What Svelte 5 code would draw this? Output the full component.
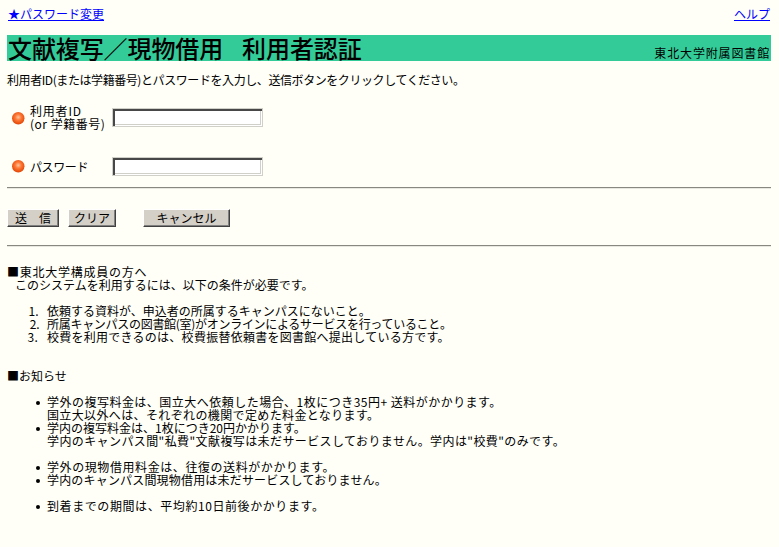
<script>
  const conditions = [
    { text: '依頼する資料が、申込者の所属するキャンパスにないこと。', cls: '' },
    { text: '所属キャンパスの図書館(室)がオンラインによるサービスを行っていること。', cls: 'tight' },
    { text: '校費を利用できるのは、校費振替依頼書を図書館へ提出している方です。', cls: 'wide' }
  ];
</script>

{#snippet ball(id)}
  <svg class="ball" width="13" height="13" viewBox="0 0 13 13" aria-hidden="true">
    <defs>
      <radialGradient id={id} cx="0.5" cy="0.42" r="0.6">
        <stop offset="0" stop-color="#ffc8a0" />
        <stop offset="0.4" stop-color="#ff7a38" />
        <stop offset="1" stop-color="#e04000" />
      </radialGradient>
    </defs>
    <circle cx="6.25" cy="6.25" r="6.2" fill="url(#{id})" />
  </svg>
{/snippet}

<div class="page">
  <nav class="top">
    <a href="#pw">★パスワード変更</a>
    <a href="#help">ヘルプ</a>
  </nav>

  <header class="bar">
    <h1><span>文献複写／現物借用</span><span>利用者認証</span></h1>
    <span class="lib">東北大学附属図書館</span>
  </header>

  <p class="intro">利用者ID(または学籍番号)とパスワードを入力し、送信ボタンをクリックしてください。</p>

  <form class="fields">
    <div class="field first">
      {@render ball('b1')}
      <label class="lbl" for="uid"><span class="l1">利用者ID</span><br /><span class="l2">(or 学籍番号)</span></label>
      <input id="uid" type="text" />
    </div>
    <div class="field second">
      {@render ball('b2')}
      <label class="lbl" for="pw"><span class="l3">パスワード</span></label>
      <input id="pw" type="password" />
    </div>
  </form>

  <hr class="rule-a" />

  <div class="buttons">
    <button type="button" class="send">送　信</button>
    <button type="button" class="clear">クリア</button>
    <button type="button" class="cancel">キャンセル</button>
  </div>

  <hr class="rule-b" />

  <section class="members">
    <div class="head">■東北大学構成員の方へ</div>
    <div class="indent">このシステムを利用するには、以下の条件が必要です。</div>
    <ol>
      {#each conditions as c}<li class={c.cls}>{c.text}</li>{/each}
    </ol>
  </section>

  <section class="notice">
    <div>■お知らせ</div>
    <ul>
      <li><span class="s48">学外の複写料金は、国立大へ依頼した場合、1枚につき35円+ 送料がかかります。</span><br /><span class="s37">国立大以外へは、それぞれの機関で定めた料金となります。</span></li>
      <li><span>学内の複写料金は、1枚につき20円かかります。</span><br /><span class="s40">学内のキャンパス間"私費"文献複写は未だサービスしておりません。学内は"校費"のみです。</span><br />&nbsp;</li>
      <li><span class="s58">学外の現物借用料金は、往復の送料がかかります。</span></li>
      <li><span class="s18">学内のキャンパス間現物借用は未だサービスしておりません。</span><br />&nbsp;</li>
      <li><span class="s58">到着までの期間は、平均約10日前後かかります。</span></li>
    </ul>
  </section>
</div>

<style>
  :global(body) {
    margin: 0;
    background: #fffff8;
  }
  .page {
    padding: 7px 8px 0 7px;
    font: 12px/13px "Noto Sans CJK JP", sans-serif;
    color: #000;
  }
  a { color: #00f; }
  .top {
    display: flex;
    justify-content: space-between;
    height: 28px;
    padding: 0 1px;
  }
  .bar {
    display: flex;
    justify-content: space-between;
    align-items: flex-end;
    height: 26px;
    background: #33cc99;
  }
  h1 {
    display: flex;
    gap: 19px;
    margin: 0;
    padding-left: 1px;
    font-size: 24px;
    font-weight: 500;
    line-height: 26px;
    letter-spacing: -0.1px;
  }
  .lib {
    padding-right: 1px;
    font-size: 12px;
    line-height: 16px;
    letter-spacing: 0.85px;
  }
  .intro {
    margin: 12px 0 0;
    letter-spacing: -0.42px;
  }
  .fields { margin-top: 18px; }
  .field {
    display: flex;
    align-items: center;
  }
  .second { margin-top: 26px; }
  .ball { margin-left: 5px; flex: none; }
  .first .ball { margin-top: 2px; }
  .lbl {
    width: 82px;
    margin: 0 0 1px 5px;
  }
  .l1 { letter-spacing: 0.8px; }
  .l2 { letter-spacing: 0.5px; }
  .l3 { letter-spacing: -0.4px; }
  input {
    box-sizing: border-box;
    width: 151px;
    height: 19px;
    margin: 0;
    padding: 0;
    background: #fff;
    border: 1px solid #d0d0c8;
    outline: none;
    box-shadow: inset 2px 2px 0 #484848, inset -1px -1px 0 #fff, inset -2px -2px 0 #d0d0c8;
  }
  hr {
    height: 0;
    margin: 0;
    border: 0;
    border-top: 1px solid #888880;
    border-bottom: 1px solid #e8e8e0;
  }
  .rule-a { margin-top: 11px; }
  .buttons {
    display: flex;
    margin-top: 20px;
    height: 18px;
  }
  button {
    box-sizing: border-box;
    height: 18px;
    margin: 0;
    padding: 0 0 2px;
    font: inherit;
    color: #000;
    background: #d4d0c8;
    border: 1px solid;
    border-color: #fff #404040 #404040 #fff;
    box-shadow: inset -1px -1px 0 #808080;
  }
  .send { width: 52px; }
  .clear { width: 48px; margin-left: 9px; }
  .cancel { width: 87px; margin-left: 27px; }
  .rule-b { margin-top: 18px; }
  .members { margin-top: 18px; }
  .head { letter-spacing: 0.75px; }
  .indent { padding-left: 8px; }
  ol, ul { margin: 13px 0 0; padding-left: 40px; }
  ol li::marker { content: counter(list-item) ".\2002\2009"; }
  ul { list-style: none; }
  ul li::before {
    content: "";
    display: inline-block;
    width: 4px;
    height: 4px;
    margin: 0 7px 2px -11px;
    border-radius: 50%;
    background: #000;
    vertical-align: middle;
  }
  .tight { letter-spacing: -0.29px; }
  .wide { letter-spacing: 0.26px; }
  .s48 { letter-spacing: 0.48px; }
  .s37 { letter-spacing: 0.37px; }
  .s40 { letter-spacing: 0.4px; }
  .s58 { letter-spacing: 0.58px; }
  .s18 { letter-spacing: 0.18px; }
  .notice { margin-top: 26px; }
</style>
